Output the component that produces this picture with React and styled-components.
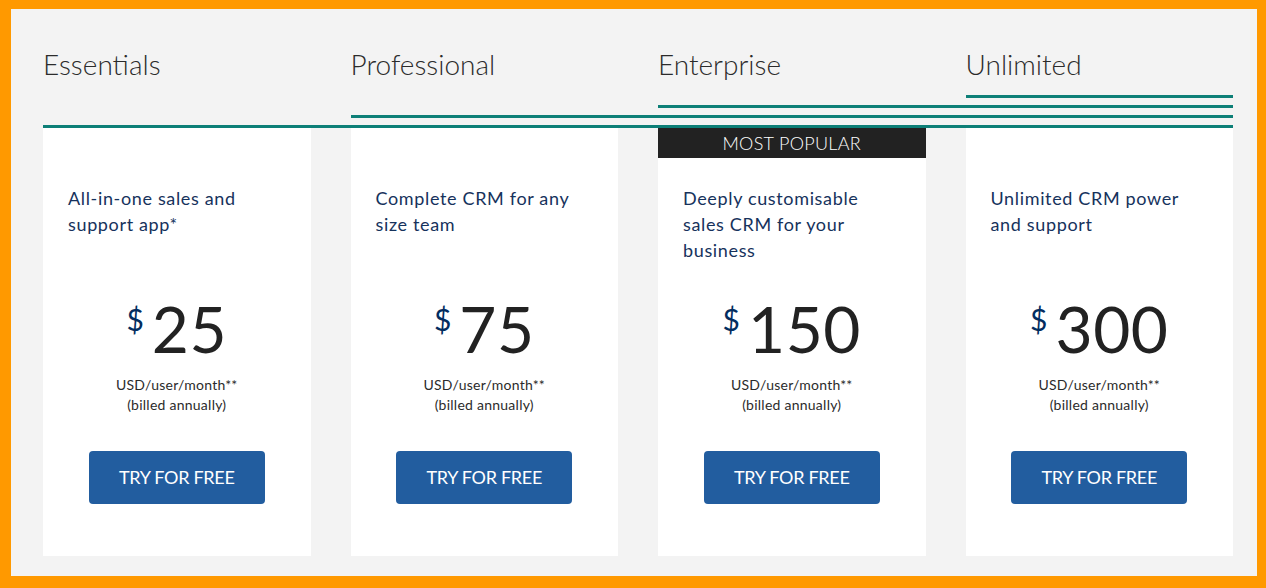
import styled, { createGlobalStyle } from 'styled-components';

const GlobalStyle = createGlobalStyle`
  html, body {
    margin: 0;
    padding: 0;
    background: #ff9900;
    font-family: Lato, 'Noto Sans', sans-serif;
  }
`;

const Frame = styled.div`
  box-sizing: border-box;
  height: 588px;
  padding: 9px 9px 12px 11px;
  background: #ff9900;
`;

const Panel = styled.div`
  box-sizing: border-box;
  height: 100%;
  background: #f3f3f3;
  padding: 39px 24px 0 32px;
`;

const Columns = styled.div`
  display: grid;
  grid-template-columns: repeat(4, 1fr);
  column-gap: 40px;
`;

const TitleRow = styled(Columns)`
  margin-bottom: 13px;
`;

const PlanTitle = styled.h2`
  margin: 0;
  font-size: 28px;
  font-weight: 300;
  line-height: 1.2;
  color: #2b2b2b;
`;

const RuleStack = styled(Columns)`
  row-gap: 7px;
`;

const Rule = styled.div`
  grid-column: ${(p) => p.$from} / -1;
  height: 3px;
  background: #0d7f77;
`;

const CardRow = styled(Columns)`
  margin-top: 0;
`;

const Card = styled.div`
  position: relative;
  background: #fff;
  padding: 57px 25px 52px;
  display: flex;
  flex-direction: column;
  align-items: center;
`;

const Badge = styled.div`
  position: absolute;
  top: 0;
  left: 0;
  right: 0;
  height: 30px;
  background: #222;
  color: #fff;
  font-size: 18px;
  font-weight: 300;
  letter-spacing: 0.3px;
  line-height: 30px;
  text-align: center;
  text-transform: uppercase;
`;

const Description = styled.p`
  align-self: stretch;
  margin: 0;
  min-height: 78px;
  font-size: 18px;
  line-height: 26px;
  letter-spacing: 0.65px;
  color: #16325c;
`;

const Price = styled.div`
  display: flex;
  align-items: flex-start;
  gap: 8px;
  margin-top: 34px;
`;

const Currency = styled.span`
  font-size: 30px;
  line-height: 1;
  margin-top: 7px;
  color: #032d60;
`;

const Amount = styled.span`
  font-size: 64px;
  line-height: 1;
  letter-spacing: 0.5px;
  color: #222;
`;

const Terms = styled.div`
  margin-top: 14px;
  font-size: 14px;
  line-height: 20px;
  letter-spacing: 0.25px;
  color: #2b2b2b;
  text-align: center;
`;

const TryButton = styled.button`
  margin-top: 36px;
  width: 176px;
  height: 53px;
  border: none;
  border-radius: 4px;
  background: #225d9f;
  color: #fff;
  font-family: inherit;
  font-size: 18px;
  letter-spacing: -0.3px;
  text-transform: uppercase;
  cursor: pointer;
`;

const plans = [
  { name: 'Essentials', text: 'All-in-one sales and support app*', price: 25 },
  { name: 'Professional', text: 'Complete CRM for any size team', price: 75 },
  { name: 'Enterprise', text: 'Deeply customisable sales CRM for your business', price: 150, popular: true },
  { name: 'Unlimited', text: 'Unlimited CRM power and support', price: 300 },
];

export default function App() {
  return (
    <>
      <GlobalStyle />
      <Frame>
        <Panel>
          <TitleRow>
            {plans.map((p) => (
              <PlanTitle key={p.name}>{p.name}</PlanTitle>
            ))}
          </TitleRow>

          {/* staggered rules, last plan on top */}
          <RuleStack>
            <Rule $from={4} />
            <Rule $from={3} />
            <Rule $from={2} />
            <Rule $from={1} />
          </RuleStack>

          <CardRow>
            {plans.map((p) => (
              <Card key={p.name}>
                {p.popular && <Badge>Most popular</Badge>}
                <Description>{p.text}</Description>
                <Price>
                  <Currency>$</Currency>
                  <Amount>{p.price}</Amount>
                </Price>
                <Terms>
                  USD/user/month**
                  <br />
                  (billed annually)
                </Terms>
                <TryButton>Try for free</TryButton>
              </Card>
            ))}
          </CardRow>
        </Panel>
      </Frame>
    </>
  );
}
